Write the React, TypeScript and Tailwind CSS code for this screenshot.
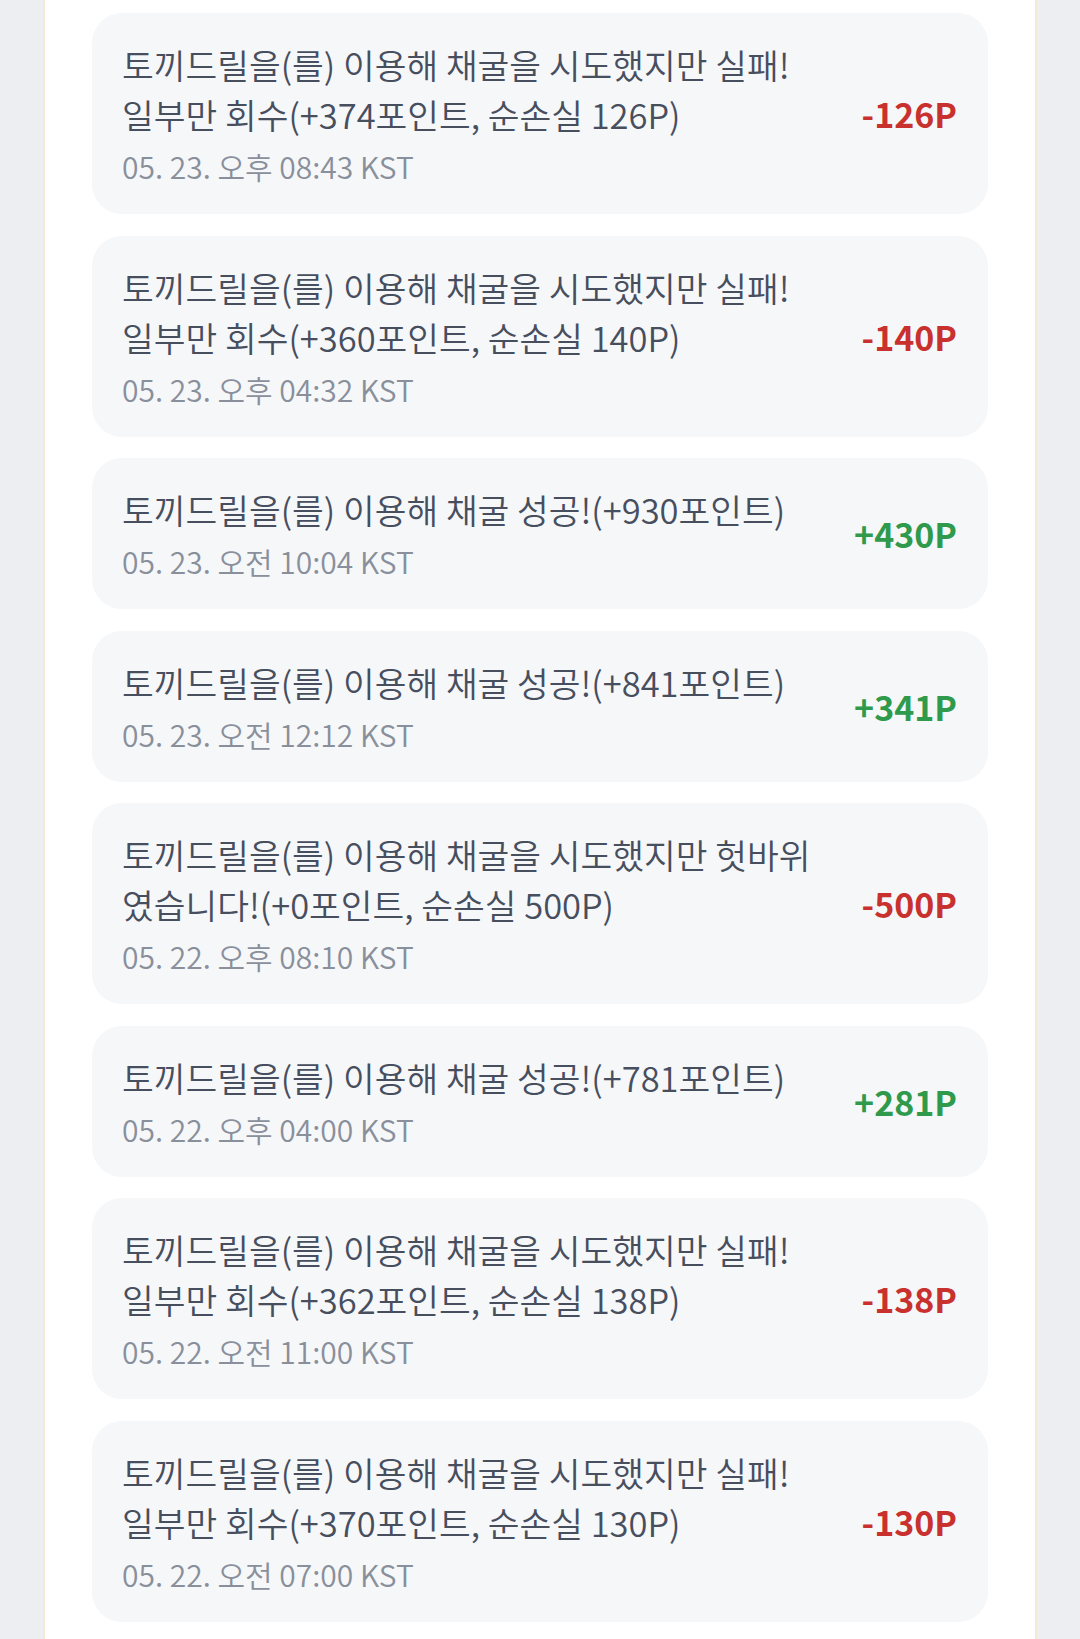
type Entry = {
  id: number
  message: string
  date: string
  amount: number
}

const entries: Entry[] = [
  { id: 1, message: '토끼드릴을(를) 이용해 채굴을 시도했지만 실패! 일부만 회수(+374포인트, 순손실 126P)', date: '05. 23. 오후 08:43 KST', amount: -126 },
  { id: 2, message: '토끼드릴을(를) 이용해 채굴을 시도했지만 실패! 일부만 회수(+360포인트, 순손실 140P)', date: '05. 23. 오후 04:32 KST', amount: -140 },
  { id: 3, message: '토끼드릴을(를) 이용해 채굴 성공!(+930포인트)', date: '05. 23. 오전 10:04 KST', amount: 430 },
  { id: 4, message: '토끼드릴을(를) 이용해 채굴 성공!(+841포인트)', date: '05. 23. 오전 12:12 KST', amount: 341 },
  { id: 5, message: '토끼드릴을(를) 이용해 채굴을 시도했지만 헛바위였습니다!(+0포인트, 순손실 500P)', date: '05. 22. 오후 08:10 KST', amount: -500 },
  { id: 6, message: '토끼드릴을(를) 이용해 채굴 성공!(+781포인트)', date: '05. 22. 오후 04:00 KST', amount: 281 },
  { id: 7, message: '토끼드릴을(를) 이용해 채굴을 시도했지만 실패! 일부만 회수(+362포인트, 순손실 138P)', date: '05. 22. 오전 11:00 KST', amount: -138 },
  { id: 8, message: '토끼드릴을(를) 이용해 채굴을 시도했지만 실패! 일부만 회수(+370포인트, 순손실 130P)', date: '05. 22. 오전 07:00 KST', amount: -130 },
]

export default function App() {
  return (
    <div
      className="min-h-screen bg-[#eceef2] px-[43px]"
      style={{ fontFamily: '"Noto Sans CJK KR", "Noto Sans", sans-serif' }}
    >
      <div className="min-h-screen bg-white border-x-2 border-x-[#f6e9d4] px-[47px] pt-[13px] pb-[20px]">
        <div className="flex flex-col gap-[21.5px]">
          {entries.map((e) => (
            <div
              key={e.id}
              className="flex items-center justify-between rounded-[30px] bg-[#f6f7f9] pl-[30px] pr-[31px] pt-[26px] pb-[26px]"
            >
              <div className="w-[702px] shrink-0">
                <p className="text-[34.5px] font-[350] leading-[50px] text-[#474e5e]" style={{ wordBreak: 'break-all' }}>
                  {e.message}
                </p>
                <p className="mt-[5px] text-[30px] font-[350] leading-[44px] text-[#898f9b]">{e.date}</p>
              </div>
              <div
                className={`shrink-0 text-[34px] font-bold ${e.amount < 0 ? 'text-[#c8312e]' : 'text-[#2f9a4c]'}`}
              >
                {e.amount < 0 ? `-${Math.abs(e.amount)}P` : `+${e.amount}P`}
              </div>
            </div>
          ))}
        </div>
      </div>
    </div>
  )
}
